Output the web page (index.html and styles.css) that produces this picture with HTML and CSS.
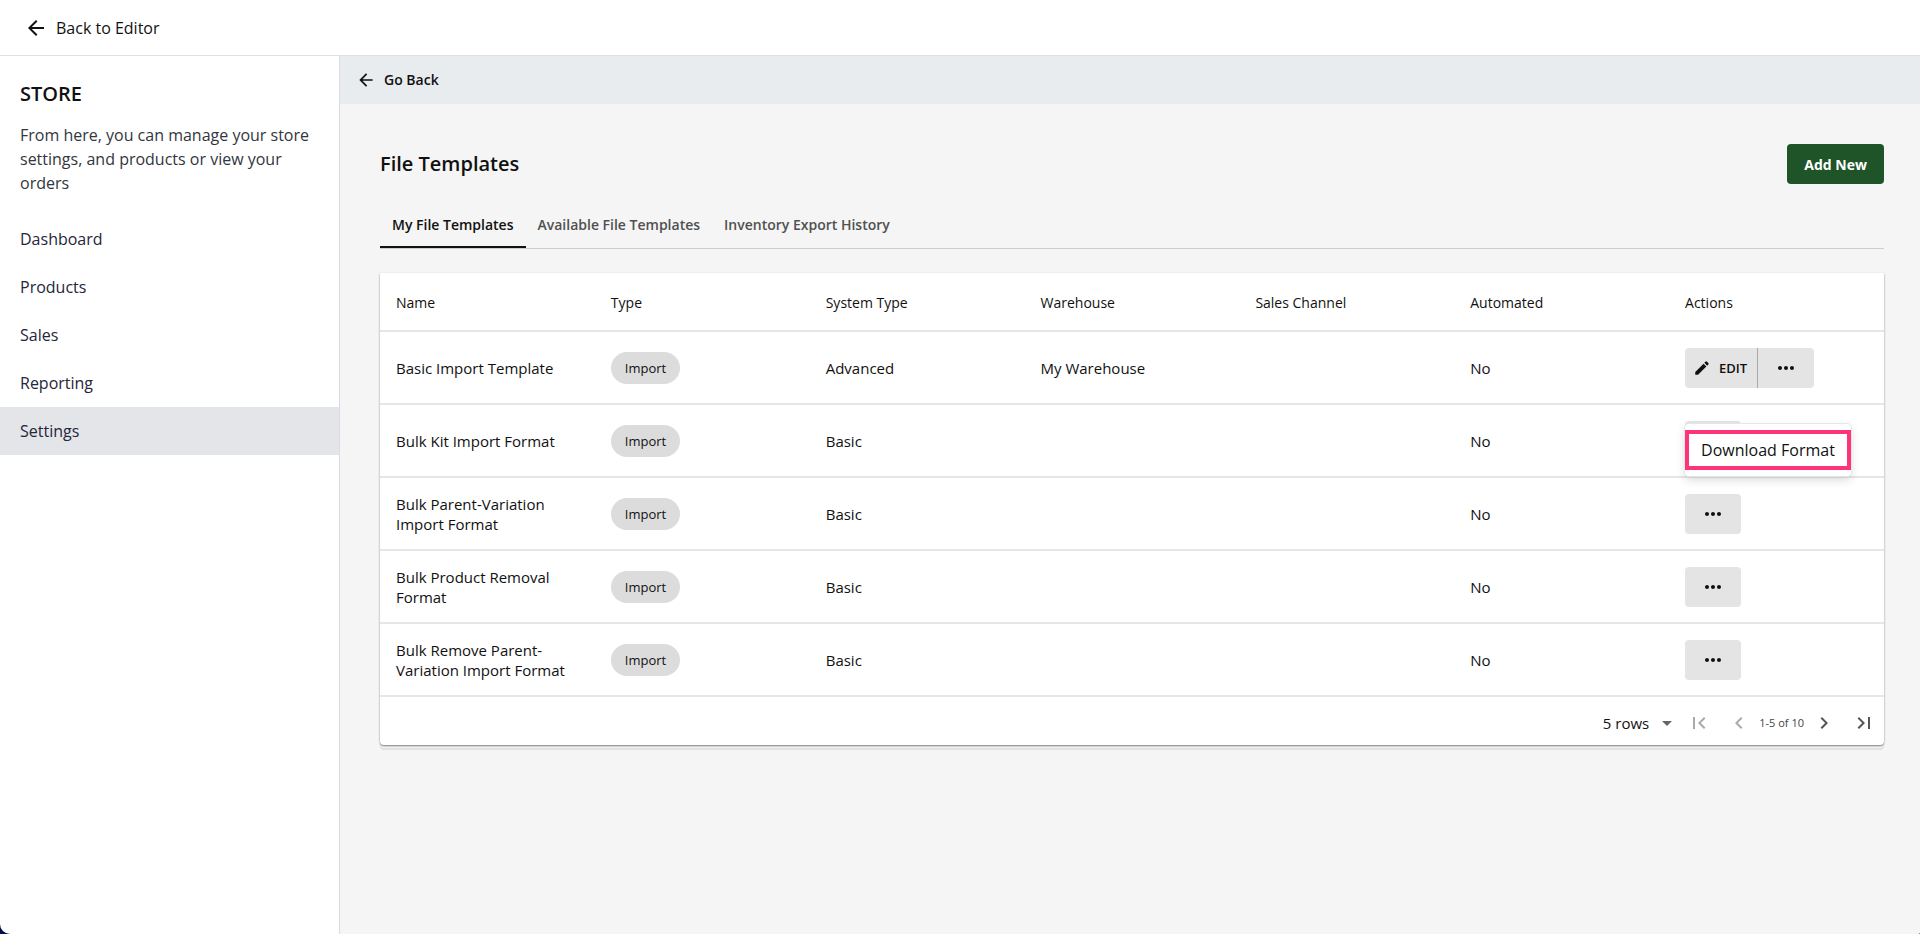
FILE: index.html
```html
<!DOCTYPE html>
<html lang="en">
<head>
    <meta charset="UTF-8">
    <meta name="viewport" content="width=device-width, initial-scale=1.0">
    <title>File Templates</title>
    <link rel="stylesheet" href="styles.css">
</head>
<body>
    <!-- shared icons -->
    <svg class="sprite" aria-hidden="true">
        <symbol id="arrow-back" viewBox="0 0 24 24"><path d="M20 11H7.83l5.59-5.59L12 4l-8 8 8 8 1.41-1.41L7.83 13H20v-2z"/></symbol>
        <symbol id="more" viewBox="0 0 24 24"><path d="M6 10c-1.1 0-2 .9-2 2s.9 2 2 2 2-.9 2-2-.9-2-2-2zm12 0c-1.1 0-2 .9-2 2s.9 2 2 2 2-.9 2-2-.9-2-2-2zm-6 0c-1.1 0-2 .9-2 2s.9 2 2 2 2-.9 2-2-.9-2-2-2z"/></symbol>
        <symbol id="pencil" viewBox="0 0 24 24"><path d="M3 17.25V21h3.75L17.81 9.94l-3.75-3.75L3 17.25zM20.71 7.04c.39-.39.39-1.02 0-1.41l-2.34-2.34a.9959.9959 0 0 0-1.41 0l-1.83 1.83 3.75 3.75 1.83-1.83z"/></symbol>
    </svg>

    <div class="app">
        <header class="topbar">
            <a class="back-editor" href="#">
                <svg class="icon"><use href="#arrow-back"/></svg>
                Back to Editor
            </a>
        </header>

        <div class="layout">
            <aside class="sidebar">
                <h2>STORE</h2>
                <p>From here, you can manage your store settings, and products or view your orders</p>
                <nav>
                    <a href="#">Dashboard</a>
                    <a href="#">Products</a>
                    <a href="#">Sales</a>
                    <a href="#">Reporting</a>
                    <a href="#" class="active">Settings</a>
                </nav>
            </aside>

            <main>
                <div class="subbar">
                    <a class="go-back" href="#">
                        <svg class="icon-sm"><use href="#arrow-back"/></svg>
                        Go Back
                    </a>
                </div>

                <div class="content">
                    <div class="title-row">
                        <h1>File Templates</h1>
                        <button class="btn-primary">Add New</button>
                    </div>

                    <div class="tabs" role="tablist">
                        <button class="tab selected" role="tab" aria-selected="true">My File Templates</button>
                        <button class="tab" role="tab">Available File Templates</button>
                        <button class="tab" role="tab">Inventory Export History</button>
                    </div>

                    <div class="card">
                        <table>
                            <thead>
                                <tr>
                                    <th>Name</th>
                                    <th>Type</th>
                                    <th>System Type</th>
                                    <th>Warehouse</th>
                                    <th>Sales Channel</th>
                                    <th>Automated</th>
                                    <th>Actions</th>
                                </tr>
                            </thead>
                            <tbody>
                                <tr>
                                    <td>Basic Import Template</td>
                                    <td><span class="chip">Import</span></td>
                                    <td>Advanced</td>
                                    <td>My Warehouse</td>
                                    <td></td>
                                    <td>No</td>
                                    <td>
                                        <div class="actions">
                                            <button class="btn-edit"><svg><use href="#pencil"/></svg>EDIT</button>
                                            <button class="btn-more" aria-label="More"><svg><use href="#more"/></svg></button>
                                        </div>
                                    </td>
                                </tr>
                                <tr>
                                    <td>Bulk Kit Import Format</td>
                                    <td><span class="chip">Import</span></td>
                                    <td>Basic</td>
                                    <td></td>
                                    <td></td>
                                    <td>No</td>
                                    <td>
                                        <div class="actions">
                                            <button class="btn-more" aria-label="More"><svg><use href="#more"/></svg></button>
                                            <div class="menu">
                                                <button class="menu-item">Download Format</button>
                                            </div>
                                        </div>
                                    </td>
                                </tr>
                                <tr>
                                    <td>Bulk Parent-Variation Import Format</td>
                                    <td><span class="chip">Import</span></td>
                                    <td>Basic</td>
                                    <td></td>
                                    <td></td>
                                    <td>No</td>
                                    <td>
                                        <div class="actions">
                                            <button class="btn-more" aria-label="More"><svg><use href="#more"/></svg></button>
                                        </div>
                                    </td>
                                </tr>
                                <tr>
                                    <td>Bulk Product Removal Format</td>
                                    <td><span class="chip">Import</span></td>
                                    <td>Basic</td>
                                    <td></td>
                                    <td></td>
                                    <td>No</td>
                                    <td>
                                        <div class="actions">
                                            <button class="btn-more" aria-label="More"><svg><use href="#more"/></svg></button>
                                        </div>
                                    </td>
                                </tr>
                                <tr>
                                    <td>Bulk Remove Parent-Variation Import Format</td>
                                    <td><span class="chip">Import</span></td>
                                    <td>Basic</td>
                                    <td></td>
                                    <td></td>
                                    <td>No</td>
                                    <td>
                                        <div class="actions">
                                            <button class="btn-more" aria-label="More"><svg><use href="#more"/></svg></button>
                                        </div>
                                    </td>
                                </tr>
                            </tbody>
                        </table>

                        <div class="pagination">
                            <label class="rows">
                                <select aria-label="Rows per page">
                                    <option>5 rows</option>
                                    <option>10 rows</option>
                                    <option>20 rows</option>
                                </select>
                                <svg viewBox="0 0 24 24"><path d="M7 10l5 5 5-5z"/></svg>
                            </label>
                            <button class="page-btn" disabled aria-label="First page"><svg viewBox="0 0 24 24"><path d="M18.41 16.59L13.82 12l4.59-4.59L17 6l-6 6 6 6zM6 6h2v12H6z"/></svg></button>
                            <button class="page-btn" disabled aria-label="Previous page"><svg viewBox="0 0 24 24"><path d="M15.41 7.41L14 6l-6 6 6 6 1.41-1.41L10.83 12z"/></svg></button>
                            <span class="range">1-5 of 10</span>
                            <button class="page-btn" aria-label="Next page"><svg viewBox="0 0 24 24"><path d="M10 6L8.59 7.41 13.17 12l-4.58 4.59L10 18l6-6z"/></svg></button>
                            <button class="page-btn" aria-label="Last page"><svg viewBox="0 0 24 24"><path d="M5.59 7.41L10.18 12l-4.59 4.59L7 18l6-6-6-6zM16 6h2v12h-2z"/></svg></button>
                        </div>
                    </div>
                </div>
            </main>
        </div>
    </div>
</body>
</html>
```
FILE: styles.css
```css
* {
    box-sizing: border-box;
}
html {
    background: #0a0a50;
}
body {
    margin: 0;
    font-family: "Open Sans", "Noto Sans", sans-serif;
    font-size: 16px;
    line-height: 24px;
    color: #111;
}
button, select {
    font-family: inherit;
    color: inherit;
    border: 0;
    padding: 0;
    cursor: pointer;
}
a {
    color: inherit;
    text-decoration: none;
}
svg {
    fill: currentColor;
    flex-shrink: 0;
}
.sprite {
    display: none;
}
.icon {
    width: 24px;
    height: 24px;
}
.icon-sm {
    width: 20px;
    height: 20px;
}

.app {
    display: flex;
    flex-direction: column;
    min-height: 100vh;
    background: #fff;
    border-radius: 0 0 2px 10px;
    overflow: hidden;
}
.topbar {
    display: flex;
    align-items: center;
    height: 56px;
    padding: 0 24px;
    border-bottom: 1px solid #dfe0e2;
}
.back-editor {
    display: flex;
    align-items: center;
    gap: 8px;
}
.layout {
    display: flex;
    flex: 1;
}

/* sidebar */
.sidebar {
    width: 340px;
    flex-shrink: 0;
    padding-top: 24px;
    border-right: 1px solid #d9dbe0;
}
.sidebar h2 {
    margin: 0;
    padding: 0 20px;
    font-size: 20px;
    line-height: 28px;
    font-weight: 600;
}
.sidebar p {
    margin: 15px 0 20px;
    padding: 0 20px;
    color: #33363d;
}
.sidebar nav a {
    display: block;
    padding: 12px 20px;
    color: #25263a;
}
.sidebar nav a.active {
    background: #e4e5e9;
}

/* main area */
main {
    flex: 1;
    min-width: 0;
    background: #f5f5f5;
}
.subbar {
    display: flex;
    align-items: center;
    height: 48px;
    padding: 0 16px;
    background: #e8ecef;
}
.go-back {
    display: flex;
    align-items: center;
    gap: 8px;
    font-size: 14px;
    font-weight: 600;
}
.content {
    padding: 40px 36px 40px 40px;
}
.title-row {
    display: flex;
    align-items: center;
    justify-content: space-between;
    margin-bottom: 16px;
}
h1 {
    margin: 0;
    font-size: 20px;
    font-weight: 600;
}
.btn-primary {
    height: 40px;
    padding: 0 17px;
    border-radius: 4px;
    background: #1e5428;
    color: #fff;
    font-size: 14px;
    font-weight: 700;
}
.tabs {
    display: flex;
    margin-bottom: 24px;
    border-bottom: 1px solid #ccd0cc;
}
.tab {
    height: 48px;
    padding: 0 12px;
    background: none;
    border-top: 2px solid transparent;
    border-bottom: 2px solid transparent;
    font-size: 14px;
    font-weight: 600;
    color: #505050;
}
.tab.selected {
    color: #111;
    border-bottom-color: #111;
}

/* table */
.card {
    background: #fff;
    border-radius: 0 0 4px 4px;
    box-shadow: 0 1px 2px rgba(0, 0, 0, 0.5), 0 3px 0 #f5f5f5, 0 5px 0 #e2e2e2;
}
table {
    width: 100%;
    table-layout: fixed;
    border-collapse: separate;
    border-spacing: 0;
}
th, td {
    padding: 0 16px;
    border-bottom: 2px solid #e6e6e6;
    text-align: left;
    line-height: 20px;
}
th {
    height: 59px;
    padding-top: 2px;
    font-size: 14px;
    font-weight: 500;
}
td {
    height: 73px;
    font-size: 15px;
}
.chip {
    display: inline-flex;
    align-items: center;
    height: 32px;
    padding: 0 14px;
    border-radius: 16px;
    background: #dcdcdd;
    font-size: 13px;
}
.actions {
    display: flex;
    position: relative;
}
.actions button {
    display: flex;
    align-items: center;
    height: 40px;
    background: #e4e4e4;
}
.btn-edit {
    gap: 8px;
    padding: 0 10px 0 8px;
    border-right: 1px solid #aaa;
    border-radius: 4px 0 0 4px;
    font-size: 13px;
    font-weight: 600;
}
.btn-edit svg {
    width: 18px;
    height: 18px;
}
.btn-more {
    justify-content: center;
    width: 56px;
    border-radius: 4px;
}
.btn-edit + .btn-more {
    border-radius: 0 4px 4px 0;
}
.btn-more svg {
    width: 24px;
    height: 24px;
}
.menu {
    position: absolute;
    top: 3px;
    left: 0;
    z-index: 1;
    padding: 6px 0;
    background: #fff;
    border-radius: 4px;
    box-shadow: 0 0 0 1px #e6e6e6, 0 4px 10px rgba(0, 0, 0, 0.15);
}
.actions .menu-item {
    padding: 0 12px;
    background: #fff;
    border: 4px solid #ff3377;
    font-size: 16px;
    white-space: nowrap;
}

/* pagination */
.pagination {
    display: flex;
    align-items: center;
    justify-content: flex-end;
    height: 48px;
    padding-top: 4px;
}
.rows {
    display: flex;
    align-items: center;
    gap: 6px;
}
.rows select {
    appearance: none;
    field-sizing: content;
    background: none;
    font-size: 15px;
}
.rows svg {
    width: 24px;
    height: 24px;
    color: #666;
    pointer-events: none;
}
.page-btn {
    display: flex;
    padding: 8px;
    background: none;
    color: #555;
}
.page-btn:disabled {
    color: #aaa;
}
.page-btn svg {
    width: 24px;
    height: 24px;
}
.range {
    font-size: 11px;
    font-weight: 500;
    color: #444;
}
```
